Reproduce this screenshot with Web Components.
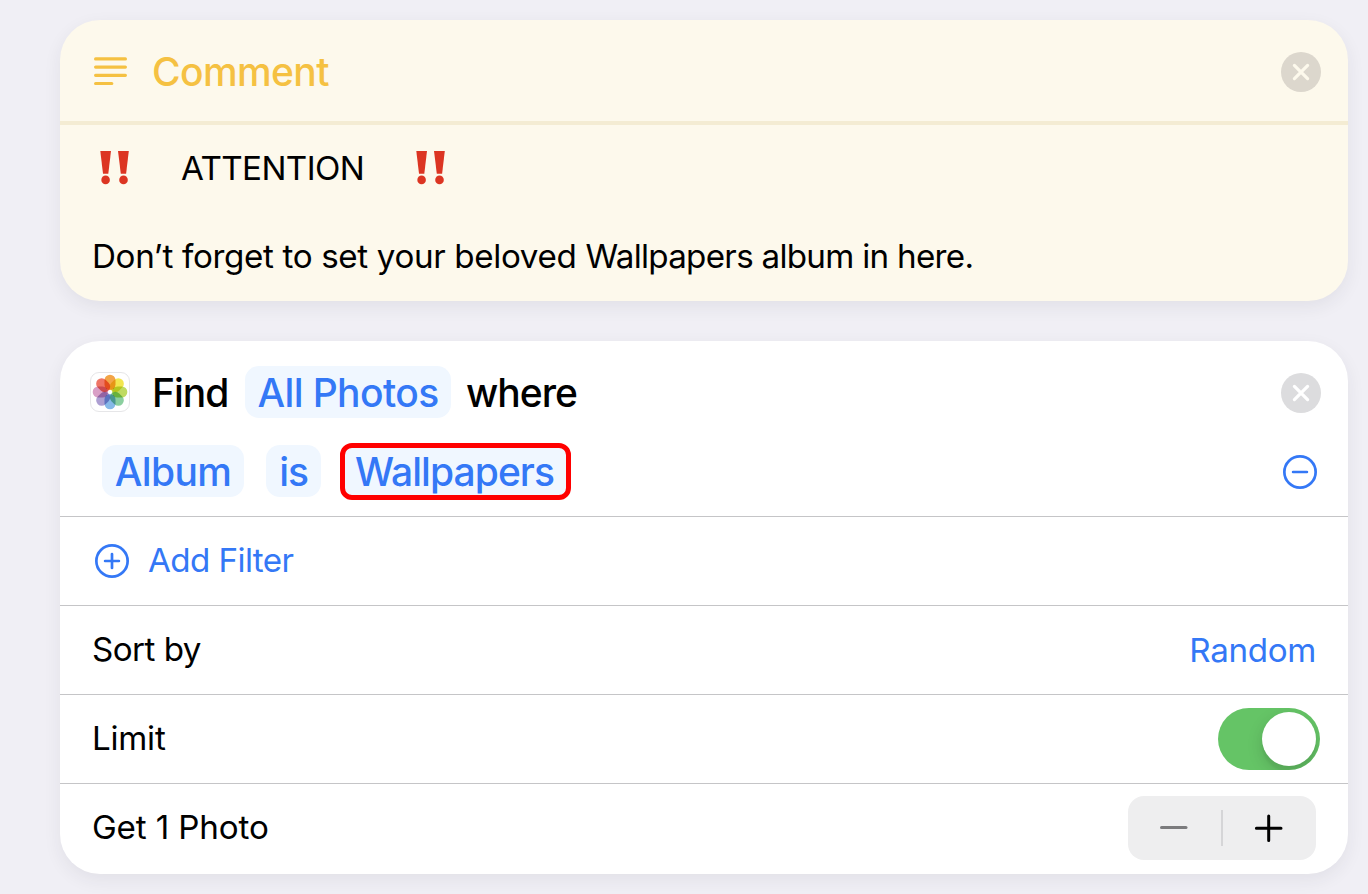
<!DOCTYPE html>
<html lang="en">
<head>
<meta charset="utf-8">
<title>Shortcut</title>
<style>
  html, body { margin: 0; height: 894px; overflow: hidden; background: #f0eff5; }
  body { font-family: Inter, "Liberation Sans", sans-serif; color: #000; }
</style>
</head>
<body>
<shortcut-editor></shortcut-editor>
<script>
const define = (name, html) => customElements.define(name, class extends HTMLElement {
  constructor() {
    super();
    this.attachShadow({ mode: 'open' }).innerHTML = html;
  }
});

define('ui-label', `<style>
  :host { display: block; font-size: 33.2px; line-height: 44px; white-space: pre; letter-spacing: var(--ls, 0); }
  :host([title-size]) { font-size: 39px; line-height: 48px; font-weight: 500; }
</style><slot></slot>`);

define('ui-token', `<style>
  :host { display: flex; align-items: center; justify-content: center; box-sizing: border-box; height: 52px;
    border-radius: 14px; background: #f0f7ff; color: #3478f6; padding-top: 2px; }
  :host([marked]) { height: 57px; border: 5px solid #f00; border-radius: 12px; padding: 0 2px 0 0; }
</style><slot></slot>`);

define('close-button', `<style>
  :host { display: block; width: 40px; height: 40px; }
  svg { display: block; }
</style><svg width="40" height="40" viewBox="0 0 40 40"><circle cx="20" cy="20" r="20" fill="var(--disc, #dcdcde)"/>
<path d="M13.4 13.4 26.6 26.6M26.6 13.4 13.4 26.6" stroke="var(--cross, #fff)" stroke-width="3.2" stroke-linecap="round"/></svg>`);

define('round-icon', `<style>
  :host { display: block; width: 34px; height: 34px; }
  svg { display: block; } .v { display: none; }
  :host([plus]) .v { display: block; }
</style><svg width="34" height="34" viewBox="0 0 34 34" fill="none" stroke="#3478f6" stroke-width="2.7" stroke-linecap="round">
<circle cx="17" cy="17" r="15.65"/><path d="M10.1 17H23.9"/><path class="v" d="M17 10.1V23.9"/></svg>`);

define('lines-icon', `<style>
  :host { display: block; width: 34px; height: 29px; }
  svg { display: block; }
</style><svg width="34" height="29" viewBox="0 0 34 29" stroke="#f5c142" stroke-width="3.2" stroke-linecap="round">
<path d="M1.6 1.9H31.4M1.6 10.1H31.4M1.6 18.3H31.4M1.6 26.5H17.8"/></svg>`);

define('double-bang', `<style>
  :host { display: block; width: 30px; height: 34px; }
  svg { display: block; }
</style><svg width="30" height="34" viewBox="0 0 30 34" fill="#dc3522">
<path d="M.3 0H11L8.3 22.8H3Z"/><circle cx="5.6" cy="28.9" r="4.3"/>
<path d="M18 0H28.8L26.1 22.8H20.8Z"/><circle cx="23.5" cy="28.9" r="4.3"/></svg>`);

const petals = ['#f3a548', '#f2e650', '#bfdb62', '#8bcf9f', '#86b9e8', '#ad9fd2', '#d99fc6', '#ef7566'];
define('photos-icon', `<style>
  :host { display: block; box-sizing: border-box; width: 40px; height: 40px; border: 1px solid #e6e6e8; border-radius: 9px; background: #fff; }
  svg { display: block; margin: -1px; isolation: isolate; }
  rect { mix-blend-mode: multiply; }
</style><svg width="40" height="40" viewBox="-20 -20 40 40">${petals.map((c, i) =>
  `<rect x="-5.5" y="-17.3" width="11" height="15.3" rx="5.5" fill="${c}" transform="rotate(${i * 45})"/>`).join('')}</svg>`);

define('toggle-switch', `<style>
  :host { display: flex; justify-content: flex-end; box-sizing: border-box; width: 102px; height: 62px; padding: 4px; border-radius: 31px; background: #65c466; overflow: hidden; }
  i { width: 54px; height: 54px; border-radius: 50%; background: #fff; box-shadow: 0 6px 16px rgba(0,0,0,.15), 0 6px 2px rgba(0,0,0,.04); }
</style><i></i>`);

define('step-control', `<style>
  :host { display: flex; align-items: center; width: 188px; height: 64px; border-radius: 16px; background: #eeeeef; }
  svg { display: block; }
</style><svg width="188" height="64" viewBox="0 0 188 64" fill="none" stroke-linecap="round">
<path d="M33.5 31.5H58" stroke="#7b7b7d" stroke-width="3"/><path d="M94 14V50" stroke="#d5d5d7" stroke-width="2" stroke-linecap="butt"/>
<path d="M128.4 32.3H153M140.7 20V44.6" stroke="#000" stroke-width="3"/></svg>`);

define('action-card', `<style>
  :host { display: block; overflow: visible; border-radius: 40px; background: var(--card, #fff); box-shadow: 0 6px 18px rgba(40,40,60,.07); }
</style><slot></slot>`);

define('list-row', `<style>
  :host { display: flex; align-items: center; justify-content: space-between; box-sizing: border-box; height: 89px; border-top: 1px solid #c5c5c7; padding: 0 32px; }
  .lead { display: flex; align-items: center; gap: 19px; }
  .text { padding-bottom: 2px; }
</style><div class="lead"><slot name="lead"></slot><div class="text"><slot></slot></div></div><slot name="end"></slot>`);

define('comment-action', `<style>
  action-card { --card: #fdf9ec; height: 281px; }
  header { display: flex; align-items: center; box-sizing: border-box; height: 105px; padding: 0 27px 0 34px; border-bottom: 4px solid #f4ecd3; }
  lines-icon { margin-top: 2px; }
  header ui-label { color: #f5c142; margin-left: 24px; flex: 1; --ls: -.6px; padding-top: 3px; }
  close-button { --disc: #dcd7cd; --cross: #fdf9ec; margin-top: 3px; }
  .line { display: flex; align-items: center; height: 44px; padding: 21px 0 0 40px; }
  .line ui-label { margin: 0 0 0 51px; width: 235px; --ls: -.6px; }
  .text { padding: 44px 0 0 32px; --ls: -.36px; }
  .tight { letter-spacing: -.72px; }
</style><action-card>
<header><lines-icon></lines-icon><ui-label title-size>Comment</ui-label><close-button></close-button></header>
<div class="line"><double-bang></double-bang><ui-label>ATTENTION</ui-label><double-bang></double-bang></div>
<div class="text"><ui-label>Don’t forget to set your beloved <span class="tight">Wallpapers album in here.</span></ui-label></div>
</action-card>`);

define('find-action', `<style>
  action-card { height: 533px; }
  .find { display: flex; align-items: center; height: 52px; padding: 25px 27px 0 30px; }
  .first { width: 93px; margin-left: 22px; --ls: -1px; padding-top: 2px; }
  .last { margin-left: 15px; flex: 1; --ls: -1px; padding-top: 2px; }
  close-button { margin-top: 2px; }
  .filter { display: flex; align-items: center; height: 57px; padding: 25px 31px 16px 42px; }
  .filter round-icon { margin-left: auto; }
  .filter ui-token:not([marked]) { margin-bottom: 1px; }
  .all { width: 206px; --ls: -.6px; } .album { width: 142px; --ls: -.6px; }
  .filter .is { width: 55px; margin: 0 19px 0 22px; --ls: -1.2px; } .wall { width: 231px; --ls: -.95px; }
  .blue { color: #3478f6; }
  toggle-switch { margin-right: -4px; }
</style><action-card>
<div class="find"><photos-icon></photos-icon><ui-label class="first" title-size>Find</ui-label><ui-token class="all"><ui-label title-size>All Photos</ui-label></ui-token><ui-label class="last" title-size>where</ui-label><close-button></close-button></div>
<div class="filter"><ui-token class="album"><ui-label title-size>Album</ui-label></ui-token><ui-token class="is"><ui-label title-size>is</ui-label></ui-token><ui-token class="wall" marked><ui-label title-size>Wallpapers</ui-label></ui-token><round-icon></round-icon></div>
<list-row style="--ls:-.6px"><round-icon plus slot="lead" style="margin-left:3px"></round-icon><ui-label class="blue">Add Filter</ui-label></list-row>
<list-row style="--ls:-.55px"><ui-label>Sort by</ui-label><ui-label class="blue" slot="end" style="--ls:-.35px">Random</ui-label></list-row>
<list-row style="--ls:-.25px"><ui-label>Limit</ui-label><toggle-switch slot="end"></toggle-switch></list-row>
<list-row style="--ls:-.15px"><ui-label>Get 1 Photo</ui-label><step-control slot="end"></step-control></list-row>
</action-card>`);

define('shortcut-editor', `<style>
  :host { display: flex; flex-direction: column; gap: 40px; padding: 20px 20px 20px 60px; }
  comment-action, find-action { display: block; }
</style><comment-action></comment-action><find-action></find-action>`);
</script>
</body>
</html>
